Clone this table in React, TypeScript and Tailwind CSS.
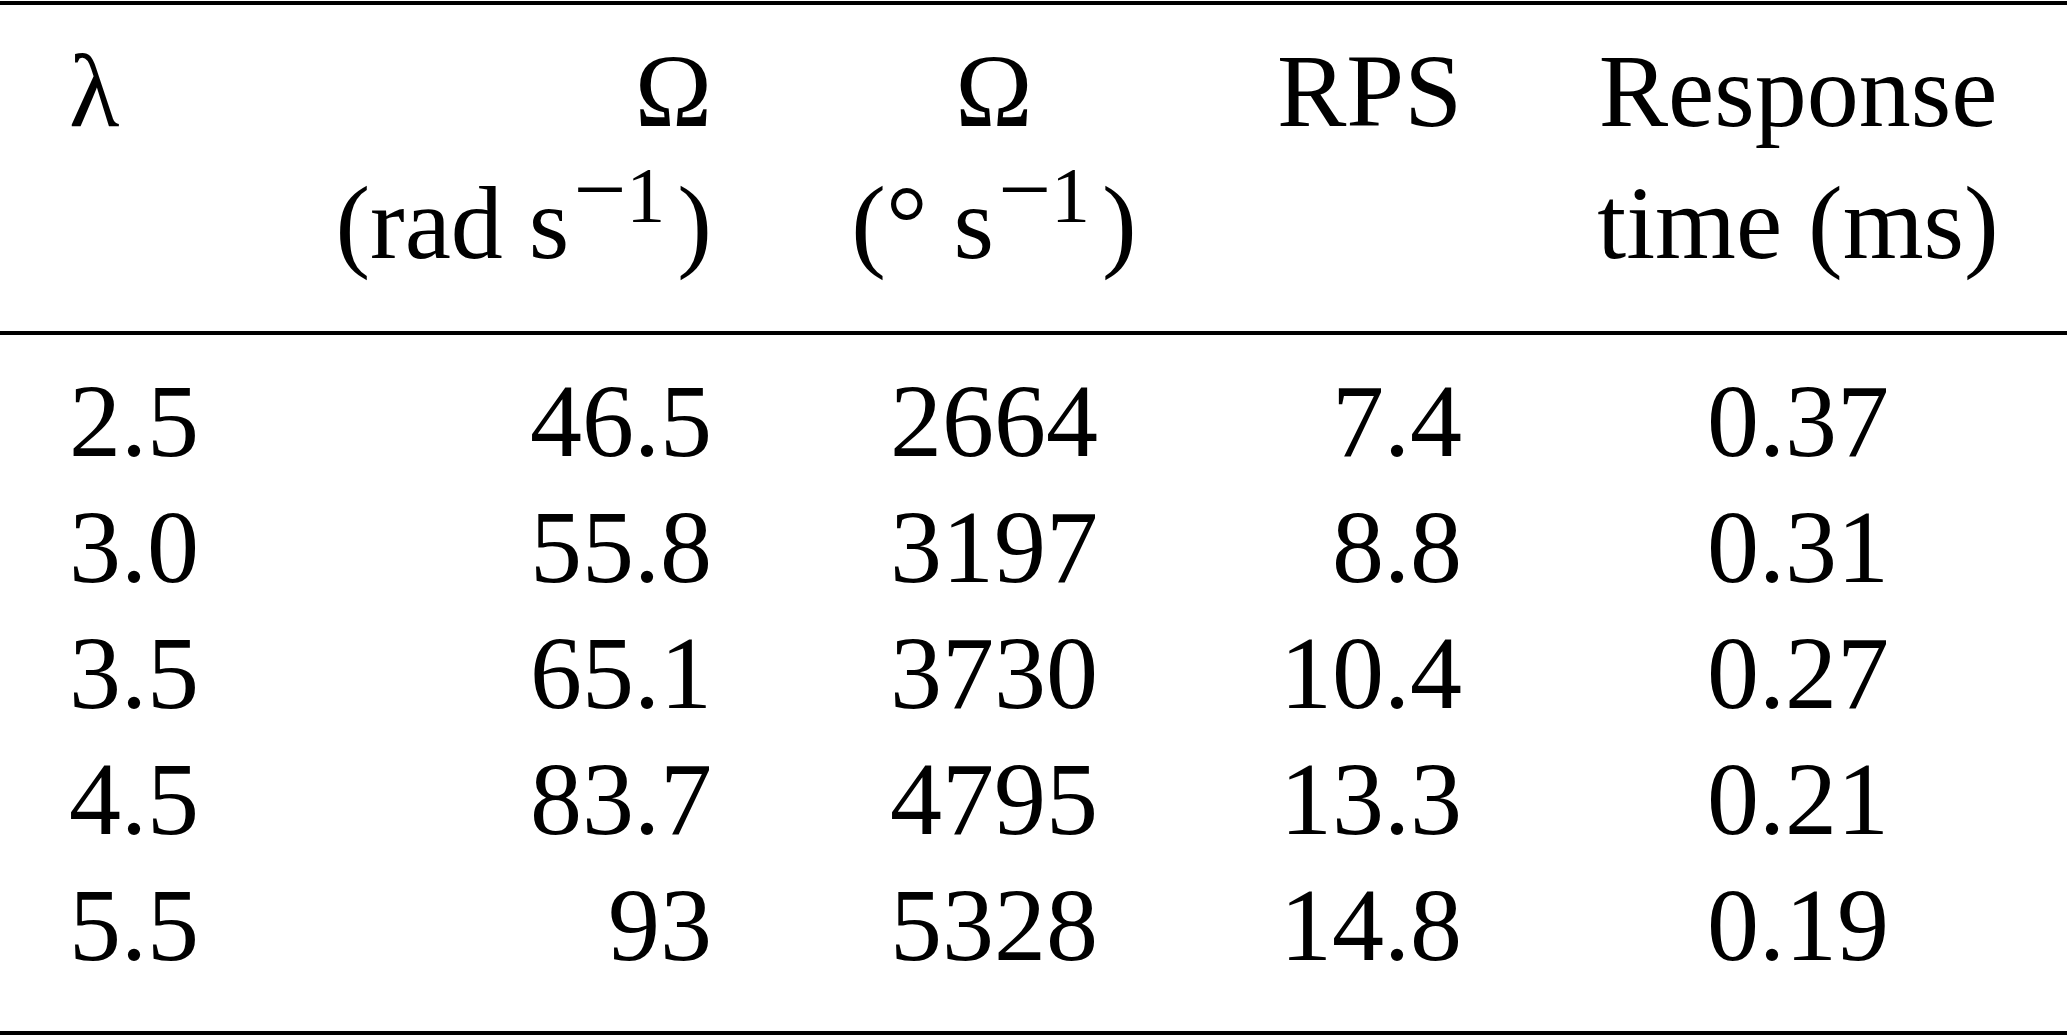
import React from 'react';

type Row = [string, string, string, string, string];

const rows: Row[] = [
  ['2.5', '46.5', '2664', '7.4', '0.37'],
  ['3.0', '55.8', '3197', '8.8', '0.31'],
  ['3.5', '65.1', '3730', '10.4', '0.27'],
  ['4.5', '83.7', '4795', '13.3', '0.21'],
  ['5.5', '93', '5328', '14.8', '0.19'],
];

// grid columns: λ | Ω rad | Ω deg | RPS | response time
const cols = 'grid grid-cols-[400px_312px_564px_186px_605px]';

const InvSeconds: React.FC = () => (
  <>
    s
    <span className="ml-[4px] mr-[12px] text-[78px] leading-[0] align-[37px]">
      <span className="text-[94px]">−</span>1
    </span>
  </>
);

const App: React.FC = () => {
  return (
    <div
      className="w-[2067px] h-[1036px] bg-white text-black text-[104px] overflow-hidden"
      style={{ fontFamily: '"Liberation Serif", "Times New Roman", serif' }}
    >
      <div className="mt-[1px] h-[4px] bg-black" />

      {/* Header */}
      <div className={`${cols} pt-[20px] pb-[42px] leading-[132px]`}>
        <div className="pl-[69px]">
          <div>λ</div>
        </div>
        <div className="flex flex-col items-end">
          <div>Ω</div>
          <div className="whitespace-nowrap">
            (rad <InvSeconds />)
          </div>
        </div>
        <div className="flex flex-col items-center">
          <div>Ω</div>
          <div className="whitespace-nowrap">
            (° <InvSeconds />)
          </div>
        </div>
        <div className="flex flex-col items-end">
          <div>RPS</div>
        </div>
        <div className="pl-[67px] flex flex-col items-center">
          <div>Response</div>
          <div className="whitespace-nowrap">time (ms)</div>
        </div>
      </div>

      <div className="h-[4px] bg-black" />

      {/* Body */}
      <div className="pt-[23px] pb-[43px] leading-[126px]">
        {rows.map((r) => (
          <div key={r[0]} className={cols}>
            <div className="pl-[69px]">{r[0]}</div>
            <div className="text-right">{r[1]}</div>
            <div className="text-center">{r[2]}</div>
            <div className="text-right">{r[3]}</div>
            <div className="pl-[67px] text-center">{r[4]}</div>
          </div>
        ))}
      </div>

      <div className="h-[4px] bg-black" />
    </div>
  );
};

export default App;
